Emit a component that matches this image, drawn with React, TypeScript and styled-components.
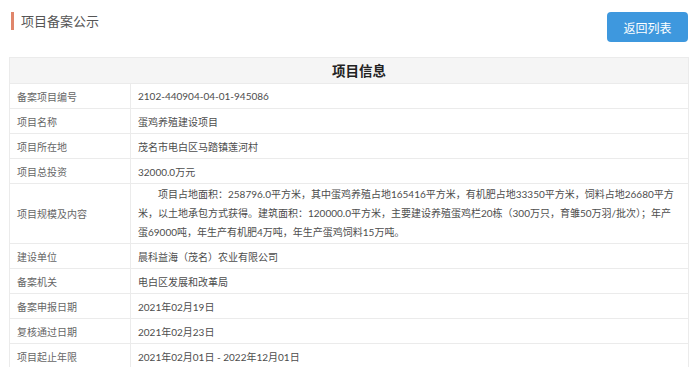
import React from 'react';
import styled, { createGlobalStyle } from 'styled-components';

const GlobalStyle = createGlobalStyle`
  body {
    margin: 0;
    background: #fff;
    font-family: Lato, "Noto Sans CJK SC", sans-serif;
  }
`;

const Page = styled.div`
  width: 700px;
  padding: 0 11px 0 9px;
  box-sizing: border-box;
`;

const TopBar = styled.div`
  display: flex;
  justify-content: space-between;
  align-items: flex-start;
  padding: 12px 1px 0 2px;
`;

const PageTitle = styled.h1`
  margin: 0;
  height: 18px;
  line-height: 18px;
  padding-left: 7px;
  border-left: 3px solid #e0866b;
  font-size: 13px;
  font-weight: 400;
  color: #555;
  font-family: "Noto Sans CJK SC", sans-serif;
`;

const BackButton = styled.button`
  width: 81px;
  height: 30px;
  border: none;
  border-radius: 4px;
  background: #3e98de;
  color: #fff;
  font-size: 12px;
  font-family: "Noto Sans CJK SC", sans-serif;
  cursor: pointer;
`;

const InfoTable = styled.div`
  margin-top: 15px;
  border: 1px solid #ebebeb;
  border-bottom: none;
`;

const TableHead = styled.div`
  height: 25px;
  line-height: 25px;
  padding-left: 20px;
  border-bottom: 1px solid #ebebeb;
  background: #f5f5f5;
  text-align: center;
  font-size: 13.5px;
  font-weight: 700;
  color: #222;
  font-family: "Noto Sans CJK SC", sans-serif;
`;

const Row = styled.div<{ $tall?: boolean }>`
  display: grid;
  grid-template-columns: 121px 1fr;
  min-height: ${({ $tall }) => ($tall ? '59px' : '24px')};
  border-bottom: 1px solid #ebebeb;
  font-size: 10px;
`;

const Label = styled.div`
  display: flex;
  align-items: center;
  padding-left: 7px;
  border-right: 1px solid #ebebeb;
  color: #666;
`;

const Value = styled.div`
  display: flex;
  align-items: center;
  padding: 0 7px;
  color: #4d4d4d;
`;

const LongText = styled.p`
  margin: 0;
  line-height: 19px;
  text-indent: 2em;
  white-space: nowrap;
`;

const rows: [string, string][] = [
  ['备案项目编号', '2102-440904-04-01-945086'],
  ['项目名称', '蛋鸡养殖建设项目'],
  ['项目所在地', '茂名市电白区马踏镇莲河村'],
  ['项目总投资', '32000.0万元'],
];

const rowsAfter: [string, string][] = [
  ['建设单位', '晨科益海（茂名）农业有限公司'],
  ['备案机关', '电白区发展和改革局'],
  ['备案申报日期', '2021年02月19日'],
  ['复核通过日期', '2021年02月23日'],
  ['项目起止年限', '2021年02月01日 - 2022年12月01日'],
];

export default function App() {
  return (
    <Page>
      <GlobalStyle />
      <TopBar>
        <PageTitle>项目备案公示</PageTitle>
        <BackButton>返回列表</BackButton>
      </TopBar>
      <InfoTable>
        <TableHead>项目信息</TableHead>
        {rows.map(([k, v]) => (
          <Row key={k}>
            <Label>{k}</Label>
            <Value>{v}</Value>
          </Row>
        ))}
        <Row $tall>
          <Label>项目规模及内容</Label>
          <Value>
            <LongText>
              项目占地面积：258796.0平方米，其中蛋鸡养殖占地165416平方米，有机肥占地33350平方米，饲料占地26680平方
              <br />
              米，以土地承包方式获得。建筑面积：120000.0平方米，主要建设养殖蛋鸡栏20栋（300万只，育雏50万羽/批次）；年产
              <br />
              蛋69000吨，年生产有机肥4万吨，年生产蛋鸡饲料15万吨。
            </LongText>
          </Value>
        </Row>
        {rowsAfter.map(([k, v]) => (
          <Row key={k}>
            <Label>{k}</Label>
            <Value>{v}</Value>
          </Row>
        ))}
      </InfoTable>
    </Page>
  );
}
